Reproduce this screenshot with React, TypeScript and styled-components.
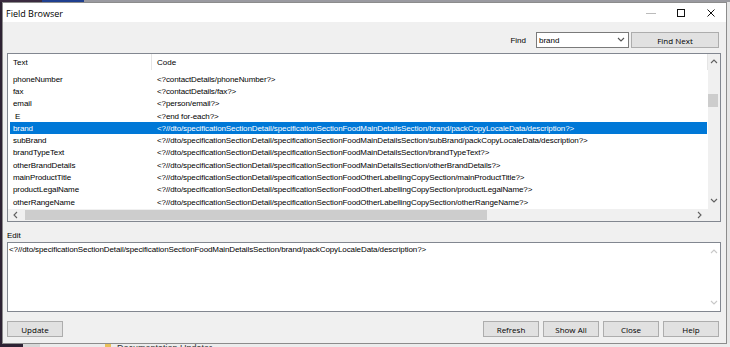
import React from "react";
import styled, { createGlobalStyle } from "styled-components";

const GlobalStyle = createGlobalStyle`
  body {
    margin: 0;
    background: #2d2233;
    font-family: "Liberation Sans", Arial, sans-serif;
  }
`;

const uiFont = `"Liberation Sans", Arial, sans-serif`;

const Desktop = styled.div`
  position: relative;
  width: 730px;
  height: 347px;
  overflow: hidden;
  display: flex;
  flex-direction: column;
  background: #e6e6e6;
`;

const TopStrip = styled.div`
  height: 2px;
  display: flex;
`;

const StripPart = styled.div<{ $w: number; $c: string }>`
  width: ${(p) => p.$w}px;
  flex: none;
  background: ${(p) => p.$c};
`;

const Middle = styled.div`
  flex: 1;
  display: flex;
`;

const LeftEdge = styled.div`
  width: 2px;
  background: #2d2233;
`;

const BottomStrip = styled.div`
  height: 4px;
  display: flex;
  overflow: hidden;
  background: #ececec;
`;

const FolderIcon = styled.div`
  width: 6px;
  height: 4px;
  margin-left: 65px;
  background: #e8c05a;
  flex: none;
`;

const TaskText = styled.div`
  font: 9px ${uiFont};
  color: #333;
  line-height: 10px;
  margin-top: 0px;
  margin-left: 6px;
  white-space: nowrap;
`;

const Window = styled.div`
  position: absolute;
  left: 2px;
  top: 2px;
  width: 725px;
  height: 342px;
  box-sizing: border-box;
  border: 1px solid #8c8c8c;
  display: flex;
  flex-direction: column;
  background: #f0f0f0;
`;

const TitleBar = styled.div`
  height: 19px;
  flex: none;
  background: #fff;
  display: flex;
  align-items: center;
  padding-left: 3px;
`;

const Title = styled.div`
  flex: 1;
  font: 9px "Open Sans", "Noto Sans", sans-serif;
  color: #000;
  margin-top: 1px;
`;

const Caption = styled.div`
  width: 30px;
  height: 19px;
  display: flex;
  align-items: center;
  justify-content: center;
`;

const Body = styled.div`
  flex: 1;
  display: flex;
  flex-direction: column;
  padding: 10px 5px 0 4px;
`;

const FindRow = styled.div`
  display: flex;
  align-items: center;
  justify-content: flex-end;
  height: 16px;
  padding-right: 2px;
`;

const Label = styled.div`
  font: 8px ${uiFont};
  color: #000;
`;

const Combo = styled.div`
  width: 89px;
  height: 14px;
  margin-left: 10px;
  border: 1px solid #7a7a7a;
  background: #fff;
  display: flex;
  align-items: center;
  font: 8px ${uiFont};
  padding-left: 2px;
`;

const ComboText = styled.div`
  flex: 1;
`;

const ComboArrow = styled.div`
  width: 14px;
  display: flex;
  justify-content: center;
`;

const Button = styled.div<{ $w?: number }>`
  width: ${(p) => p.$w ?? 54}px;
  height: 14px;
  border: 1px solid #adadad;
  background: #e1e1e1;
  display: flex;
  align-items: center;
  justify-content: center;
  font: 8px "Open Sans", "Noto Sans", sans-serif;
  color: #000;
`;

const FindButton = styled(Button)`
  margin-left: 2px;
`;

const ListBox = styled.div`
  margin-top: 5px;
  height: 169px;
  box-sizing: border-box;
  border: 1px solid #828790;
  background: #fff;
  display: grid;
  grid-template-columns: 1fr 12px;
  grid-template-rows: 1fr 12px;
  overflow: hidden;
`;

const ListContent = styled.div`
  overflow: hidden;
  display: flex;
  flex-direction: column;
`;

const Header = styled.div`
  height: 16px;
  flex: none;
  display: flex;
  font: 8px ${uiFont};
  color: #000;
`;

const HeaderCell = styled.div<{ $w?: number }>`
  ${(p) => (p.$w ? `width: ${p.$w}px;` : "flex: 1;")}
  display: flex;
  align-items: center;
  padding-left: 5px;
  box-sizing: border-box;
  border-right: 1px solid #e5e5e5;
`;

const Rows = styled.div`
  padding-top: 3px;
  padding-right: 1px;
`;

const Row = styled.div<{ $sel?: boolean }>`
  height: 12.3px;
  display: flex;
  align-items: center;
  margin-left: 2px;
  font: 8px ${uiFont};
  white-space: nowrap;
  letter-spacing: -0.1px;
  background: ${(p) => (p.$sel ? "#0078d7" : "transparent")};
  color: ${(p) => (p.$sel ? "#fff" : "#000")};
`;

const Cell = styled.div<{ $w?: number }>`
  ${(p) => (p.$w ? `width: ${p.$w}px; flex: none;` : "flex: 1;")}
  padding-left: 3px;
  box-sizing: border-box;
  overflow: hidden;
`;

const VScroll = styled.div`
  background: #f0f0f0;
  display: flex;
  flex-direction: column;
  align-items: center;
  justify-content: space-between;
  padding: 4px 0;
  box-sizing: border-box;
  position: relative;
`;

const VThumb = styled.div`
  position: absolute;
  left: 0;
  top: 40px;
  width: 10px;
  height: 13px;
  background: #cdcdcd;
`;

const HScroll = styled.div`
  background: #f0f0f0;
  display: flex;
  align-items: center;
  padding: 0 4px;
  gap: 5px;
`;

const HThumb = styled.div`
  width: 462px;
  height: 10px;
  background: #cdcdcd;
`;

const Spacer = styled.div`
  flex: 1;
`;

const Corner = styled.div`
  background: #f0f0f0;
`;

const EditLabel = styled.div`
  font: 8px ${uiFont};
  color: #000;
  height: 20px;
  display: flex;
  align-items: center;
  padding-top: 7px;
  box-sizing: border-box;
`;

const EditBox = styled.div`
  height: 70px;
  box-sizing: border-box;
  border: 1px solid #828790;
  background: #fff;
  display: flex;
`;

const EditText = styled.div`
  flex: 1;
  font: 8px ${uiFont};
  letter-spacing: -0.1px;
  color: #000;
  padding: 2px 1px;
  white-space: nowrap;
`;

const EditScroll = styled.div`
  width: 12px;
  display: flex;
  flex-direction: column;
  align-items: center;
  justify-content: space-between;
  padding: 5px 0 4px;
`;

const ButtonRow = styled.div`
  margin-top: 9px;
  display: flex;
  gap: 4px;
  padding-right: 2px;
`;

const Chevron = ({ dir, color = "#606060" }: { dir: "up" | "down" | "left" | "right"; color?: string }) => {
  const pts = {
    up: "1,5 4,2 7,5",
    down: "1,2 4,5 7,2",
    left: "5,1 2,4 5,7",
    right: "2,1 5,4 2,7",
  }[dir];
  return (
    <svg width="8" height="8" viewBox="0 0 8 8">
      <polyline points={pts} fill="none" stroke={color} strokeWidth="1.1" />
    </svg>
  );
};

const rows: [string, string][] = [
  ["phoneNumber", "<?contactDetails/phoneNumber?>"],
  ["fax", "<?contactDetails/fax?>"],
  ["email", "<?person/email?>"],
  ["\u00a0E", "<?end for-each?>"],
  ["brand", "<?//dto/specificationSectionDetail/specificationSectionFoodMainDetailsSection/brand/packCopyLocaleData/description?>"],
  ["subBrand", "<?//dto/specificationSectionDetail/specificationSectionFoodMainDetailsSection/subBrand/packCopyLocaleData/description?>"],
  ["brandTypeText", "<?//dto/specificationSectionDetail/specificationSectionFoodMainDetailsSection/brandTypeText?>"],
  ["otherBrandDetails", "<?//dto/specificationSectionDetail/specificationSectionFoodMainDetailsSection/otherBrandDetails?>"],
  ["mainProductTitle", "<?//dto/specificationSectionDetail/specificationSectionFoodOtherLabellingCopySection/mainProductTitle?>"],
  ["productLegalName", "<?//dto/specificationSectionDetail/specificationSectionFoodOtherLabellingCopySection/productLegalName?>"],
  ["otherRangeName", "<?//dto/specificationSectionDetail/specificationSectionFoodOtherLabellingCopySection/otherRangeName?>"],
];

export default function App() {
  return (
    <>
      <GlobalStyle />
      <Desktop>
        <TopStrip>
          <StripPart $w={42} $c="#3a2a3f" />
          <StripPart $w={42} $c="#1f3f8f" />
          <StripPart $w={646} $c="#9a9aa0" />
        </TopStrip>
        <Middle>
          <LeftEdge />
        </Middle>
        <BottomStrip>
          <StripPart $w={23} $c="#2d2233" />
          <StripPart $w={17} $c="#d8d8d8" />
          <FolderIcon />
          <TaskText>Documentation Updater</TaskText>
        </BottomStrip>

        <Window>
          <TitleBar>
            <Title>Field Browser</Title>
            <Caption>
              <svg width="10" height="10" viewBox="0 0 10 10">
                <line x1="0" y1="5.5" x2="10" y2="5.5" stroke="#bbb" strokeWidth="1" />
              </svg>
            </Caption>
            <Caption>
              <svg width="10" height="10" viewBox="0 0 10 10">
                <rect x="1.5" y="1.5" width="7" height="7" fill="none" stroke="#111" strokeWidth="1" />
              </svg>
            </Caption>
            <Caption>
              <svg width="10" height="10" viewBox="0 0 10 10">
                <path d="M1.5 1.5 L8.5 8.5 M8.5 1.5 L1.5 8.5" stroke="#111" strokeWidth="1" />
              </svg>
            </Caption>
          </TitleBar>

          <Body>
            <FindRow>
              <Label>Find</Label>
              <Combo>
                <ComboText>brand</ComboText>
                <ComboArrow>
                  <Chevron dir="down" color="#555" />
                </ComboArrow>
              </Combo>
              <FindButton $w={86}>Find Next</FindButton>
            </FindRow>

            <ListBox>
              <ListContent>
                <Header>
                  <HeaderCell $w={144}>Text</HeaderCell>
                  <HeaderCell>Code</HeaderCell>
                </Header>
                <Rows>
                  {rows.map(([t, c], i) => (
                    <Row key={i} $sel={t === "brand"}>
                      <Cell $w={144}>{t}</Cell>
                      <Cell>{c}</Cell>
                    </Row>
                  ))}
                </Rows>
              </ListContent>
              <VScroll>
                <Chevron dir="up" />
                <VThumb />
                <Chevron dir="down" />
              </VScroll>
              <HScroll>
                <Chevron dir="left" />
                <HThumb />
                <Spacer />
                <Chevron dir="right" />
              </HScroll>
              <Corner />
            </ListBox>

            <EditLabel>Edit</EditLabel>
            <EditBox>
              <EditText>
                {"<?//dto/specificationSectionDetail/specificationSectionFoodMainDetailsSection/brand/packCopyLocaleData/description?>"}
              </EditText>
              <EditScroll>
                <Chevron dir="up" color="#c8c8c8" />
                <Chevron dir="down" color="#c8c8c8" />
              </EditScroll>
            </EditBox>

            <ButtonRow>
              <Button>Update</Button>
              <Spacer />
              <Button>Refresh</Button>
              <Button>Show All</Button>
              <Button>Close</Button>
              <Button>Help</Button>
            </ButtonRow>
          </Body>
        </Window>
      </Desktop>
    </>
  );
}
